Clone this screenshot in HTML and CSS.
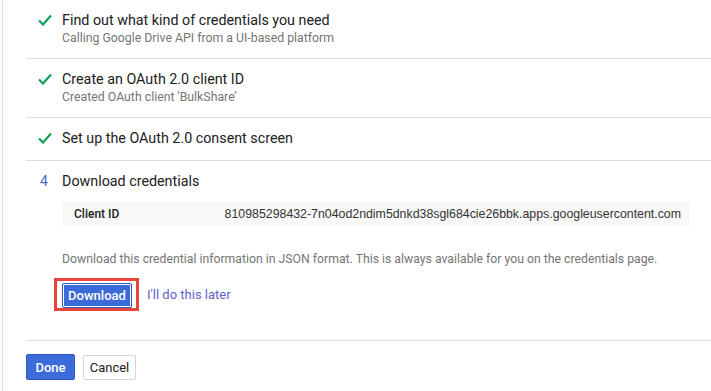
FILE: index.html
```html
<!DOCTYPE html>
<html lang="en">
  <head>
    <meta charset="UTF-8" />
    <title>Create credentials</title>
    <link rel="stylesheet" href="styles.css">
  </head>
  <body>
    <div class="page">
      <div class="wizard">
        <div class="step">
          <div class="step-icon check">
            <svg width="14" height="12" viewBox="0 0 14 12"><path d="M1 6.5l4 4L13 1.5" fill="none" stroke="#0f9d58" stroke-width="2.2"/></svg>
          </div>
          <div class="step-body">
            <div class="step-title">Find out what kind of credentials you need</div>
            <div class="step-sub">Calling Google Drive API from a UI-based platform</div>
          </div>
        </div>

        <div class="step">
          <div class="step-icon check">
            <svg width="14" height="12" viewBox="0 0 14 12"><path d="M1 6.5l4 4L13 1.5" fill="none" stroke="#0f9d58" stroke-width="2.2"/></svg>
          </div>
          <div class="step-body">
            <div class="step-title">Create an OAuth 2.0 client ID</div>
            <div class="step-sub">Created OAuth client 'BulkShare'</div>
          </div>
        </div>

        <div class="step">
          <div class="step-icon check">
            <svg width="14" height="12" viewBox="0 0 14 12"><path d="M1 6.5l4 4L13 1.5" fill="none" stroke="#0f9d58" stroke-width="2.2"/></svg>
          </div>
          <div class="step-body">
            <div class="step-title">Set up the OAuth 2.0 consent screen</div>
          </div>
        </div>

        <div class="step step-active">
          <div class="step-icon num">4</div>
          <div class="step-body">
            <div class="step-title">Download credentials</div>
            <div class="cred-box">
              <span class="cred-label">Client ID</span>
              <span class="cred-value">810985298432-7n04od2ndim5dnkd38sgl684cie26bbk.apps.googleusercontent.com</span>
            </div>
            <p class="cred-info">Download this credential information in JSON format. This is always available for you on the credentials page.</p>
            <div class="actions">
              <span class="highlight"><button class="btn btn-primary btn-focus">Download</button></span>
              <a href="#" class="link-later">I'll do this later</a>
            </div>
          </div>
        </div>

        <div class="footer">
          <button class="btn btn-primary btn-done">Done</button>
          <button class="btn btn-cancel">Cancel</button>
        </div>
      </div>
    </div>
  </body>
</html>
```

FILE: styles.css
```css
body {
  margin: 0;
  background-color: white;
  font-family: Roboto, "Liberation Sans", sans-serif;
  color: #212121;
}

.page {
  margin-left: 2px;
  border-left: 1px solid #dcdcdc;
  min-height: 391px;
  box-sizing: border-box;
}

.wizard {
  padding-left: 23px;
}

.step {
  display: flex;
  border-bottom: 1px solid #dcdcdc;
  padding: 10px 0 12px 0;
}

.step-icon {
  width: 36px;
  flex-shrink: 0;
  height: 20px;
  display: flex;
  align-items: center;
}

.step-icon.check {
  padding-left: 12px;
  box-sizing: border-box;
}

.step-icon.num {
  padding-left: 14px;
  box-sizing: border-box;
  color: #4b68c9;
  font-size: 14px;
}

.step-body {
  flex: 1;
  margin-right: 21px;
}

.step-title {
  font-size: 14.3px;
  line-height: 20px;
  color: #212121;
}

.step-sub {
  font-size: 12.3px;
  line-height: 16px;
  color: #757575;
}

.step-active {
  padding-bottom: 29px;
}

.cred-box {
  display: flex;
  justify-content: space-between;
  align-items: center;
  background-color: #f8f8f8;
  height: 24px;
  margin-top: 11px;
  padding: 0 9px 0 12px;
}

.cred-label {
  font-size: 12px;
  font-weight: 500;
  color: #212121;
}

.cred-value {
  font-family: "Liberation Sans", Arial, sans-serif;
  font-size: 12.35px;
  color: #333;
}

.cred-info {
  margin: 26px 0 0 0;
  font-size: 12.25px;
  line-height: 14px;
  color: #757575;
}

.actions {
  display: flex;
  align-items: center;
  margin-top: 12px;
  margin-left: -8px;
}

.highlight {
  display: inline-block;
  border: 3px solid #e8453c;
  padding: 2px 4px 0 5px;
  line-height: 0;
}

.btn {
  font-family: Roboto, "Liberation Sans", sans-serif;
  font-size: 13px;
  border-radius: 2px;
  cursor: pointer;
  box-sizing: border-box;
}

.btn-primary {
  background-color: #3b6bd8;
  color: white;
  border: 1px solid #2f5bc0;
}

.btn-focus {
  width: 70px;
  height: 25px;
  padding: 0;
  font-weight: 500;
  box-shadow: inset 0 0 0 1px white;
}

.link-later {
  margin-left: 8px;
  font-size: 13px;
  color: #6162cf;
  text-decoration: none;
}

.footer {
  display: flex;
  align-items: center;
  gap: 8px;
  padding-top: 13px;
}

.btn-done {
  width: 49px;
  height: 26px;
  padding: 0;
  font-weight: 500;
}

.btn-cancel {
  width: 53px;
  height: 25px;
  padding: 0;
  background-color: white;
  color: #212121;
  border: 1px solid #d6d6d6;
}
```
